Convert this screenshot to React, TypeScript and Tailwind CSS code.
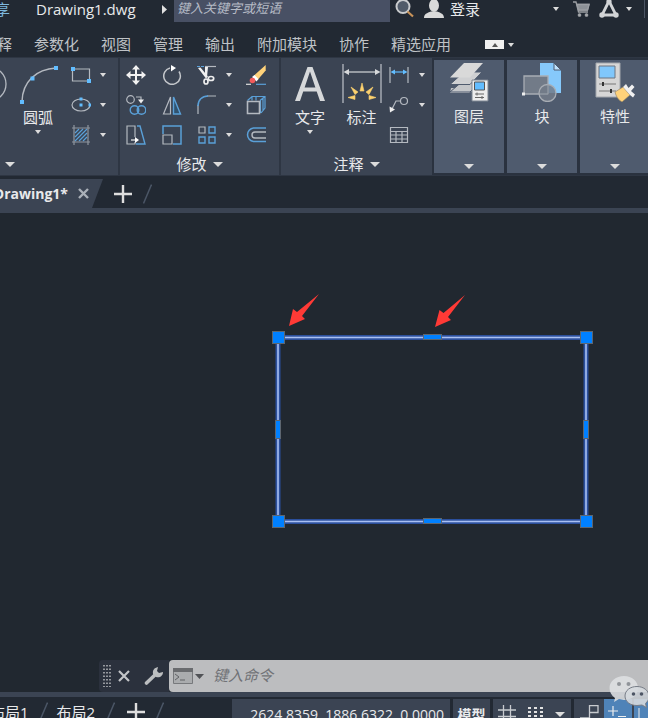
import type { ReactNode } from "react";

const BLUE = "#5aa0d8";
const DOT = "#62bdff";
const GREY = "#b4b9c0";
const LIGHT = "#d6d8da";

const menu = ["注释", "参数化", "视图", "管理", "输出", "附加模块", "协作", "精选应用"];

function Caret({ big = false }: { big?: boolean }) {
  return (
    <svg className={big ? "h-[5px] w-[10px]" : "h-[4px] w-[6px]"} viewBox="0 0 10 6" preserveAspectRatio="none">
      <path d="M0 0h10L5 6z" fill="#dcdcdc" />
    </svg>
  );
}

function Drop({ label }: { label: string }) {
  return (
    <button aria-label={label} className="flex h-[30px] items-center justify-center">
      <Caret />
    </button>
  );
}

function Tool({ label, children }: { label: string; children?: ReactNode }) {
  return (
    <button aria-label={label} className="flex h-[30px] items-center justify-center">
      <svg className="h-5 w-5 shrink-0" viewBox="0 0 20 20" fill="none" stroke={GREY} strokeWidth="1.2">
        {children}
      </svg>
    </button>
  );
}

function BigTool({ label, drop = false, children }: { label: string; drop?: boolean; children?: ReactNode }) {
  return (
    <button className="flex flex-col items-center pt-1">
      <svg className="h-10 w-10 shrink-0" viewBox="0 0 40 40" fill="none">
        {children}
      </svg>
      <span className="mt-1 h-[18px] text-[15px] leading-[18px] whitespace-nowrap">{label}</span>
      {drop && (
        <span className="flex h-3 items-center">
          <Caret />
        </span>
      )}
    </button>
  );
}

function PanelTitle({ label }: { label: string }) {
  return (
    <button className="flex h-7 w-full items-center justify-center gap-[6px] text-[15px]">
      {label}
      <Caret big />
    </button>
  );
}

function Tile({ label, children }: { label: string; children?: ReactNode }) {
  return (
    <button className="flex w-[70px] shrink-0 flex-col items-center bg-[#4f5b6e] pt-[2px] pb-1">
      <svg className="h-10 w-10 shrink-0" viewBox="0 0 40 40" fill="none">
        {children}
      </svg>
      <span className="mt-1 h-[20px] text-[15px] leading-[20px]">{label}</span>
      <span className="mt-auto">
        <Caret big />
      </span>
    </button>
  );
}

function Plus() {
  return (
    <svg className="h-[18px] w-[18px]" viewBox="0 0 18 18" stroke="#dedede" strokeWidth="2.4">
      <path d="M9 0v18M0 9h18" />
    </svg>
  );
}

function Slash() {
  return (
    <svg className="h-5 w-[9px] shrink-0" viewBox="0 0 9 20" stroke="#4b5666" strokeWidth="1.5">
      <path d="M8.500 .5L.5 19.500" />
    </svg>
  );
}

function TitleBar() {
  return (
    <header className="flex h-[22px] shrink-0 items-start overflow-hidden">
      <button className="-ml-5 h-[18px] w-[30px] shrink-0 text-[15px] leading-[18px] text-[#7db8de]">共享</button>
      <h1 className="ml-[26px] h-[18px] w-[126px] shrink-0 text-[15px] leading-[18px]">Drawing1.dwg</h1>
      <svg className="mt-[5px] h-[9px] w-[5px] shrink-0" viewBox="0 0 5 9">
        <path d="M0 0l5 4.500L0 9z" fill="#e0e0e0" />
      </svg>
      <input
        aria-label="搜索"
        placeholder="键入关键字或短语"
        className="ml-[7px] h-[22px] w-[216px] shrink-0 bg-[#485064] px-[3px] pb-[6px] text-[13px] leading-4 italic outline-none placeholder:text-[#b5bac4]"
      />
      <button aria-label="查找" className="ml-[5px] h-[18px] shrink-0">
        <svg className="h-[18px] w-5" viewBox="0 0 20 18" fill="none">
          <circle cx="8" cy="6.500" r="6.500" fill="#515b69" stroke="#c9cbcd" strokeWidth="2" />
          <path d="M12.500 11.500l5.500 5" stroke="#c8935a" strokeWidth="2.200" />
        </svg>
      </button>
      <button className="ml-[9px] flex h-[18px] shrink-0 items-start gap-[6px] text-[15px] leading-[19px]">
        <svg className="h-[18px] w-5" viewBox="0 0 20 18" fill="#dadada">
          <ellipse cx="10" cy="5.500" rx="5" ry="6.500" />
          <path d="M0 18c0-4 3-5 7-6.500h6c4 1.500 7 2.500 7 6.500z" />
        </svg>
        登录
      </button>
      <div className="ml-auto flex h-[18px] shrink-0 items-center pr-[3px]">
        <Caret />
        <button aria-label="购物车" className="ml-[14px]">
          <svg className="h-[18px] w-[17px]" viewBox="0 0 17 18" fill="none" stroke="#9c9fa4" strokeWidth="1.300">
            <path d="M0 2h3l2.500 10H15M4 4.500h12l-1.500 5.500H5.500z" />
            <path d="M4 4.500h12l-1.500 5.500H5.500z" fill="#8d9197" />
            <circle cx="6.500" cy="15" r="1.200" fill="#b4b4b4" />
            <circle cx="13.500" cy="15" r="1.200" fill="#b4b4b4" />
          </svg>
        </button>
        <button aria-label="Autodesk" className="ml-[9px]">
          <svg className="h-[18px] w-5" viewBox="0 0 20 18" fill="none" stroke="#d2d4d6" strokeWidth="2.800">
            <path d="M10 1L3 15h14z" />
            <g fill="#d2d4d6" stroke="none">
              <circle cx="10" cy="1.500" r="2.600" />
              <circle cx="3" cy="15" r="2.700" />
              <circle cx="17" cy="15" r="2.700" />
            </g>
          </svg>
        </button>
        <button aria-label="Autodesk App" className="mr-3 ml-[7px] flex">
          <Caret />
        </button>
        <span className="h-full w-px bg-[#4b5463]" />
      </div>
    </header>
  );
}

function MenuBar() {
  return (
    <nav className="flex h-[35px] shrink-0 items-center gap-[22px] overflow-hidden pt-[10px] text-[15px] text-[#bfc2c6]">
      {menu.map((m, i) => (
        <a key={m} href="#" className={i === 0 ? "-ml-[18px] shrink-0" : "shrink-0"}>
          {m}
        </a>
      ))}
      <div className="ml-3 flex shrink-0 items-center gap-1">
        <button aria-label="最小化面板" className="flex h-[9px] w-[19px] items-center justify-center bg-[#f0f0f0]">
          <svg className="h-1 w-[6px]" viewBox="0 0 6 4">
            <path d="M0 4h6L3 0z" fill="#555" />
          </svg>
        </button>
        <Caret />
      </div>
    </nav>
  );
}

function DrawPanel() {
  return (
    <section className="w-[118px] shrink-0 pt-[2px]">
      <div className="flex h-[90px]">
        <svg className="h-12 w-[7px] shrink-0" viewBox="0 0 7 48" fill="none">
          <circle cx="-11" cy="24" r="17" stroke={GREY} strokeWidth="1.300" />
        </svg>
        <div className="ml-[11px] flex w-10 justify-center">
          <BigTool label="圆弧" drop>
            <path d="M4 37.500C4.500 18 18 5 38 4" stroke={GREY} strokeWidth="1.500" />
            <path d="M2 36h4v4H2zM12.500 12.500h4v4h-4zM36 2h4v4h-4z" fill={DOT} />
          </BigTool>
        </div>
        <div className="ml-[10px] grid grid-cols-[26px_18px]">
          <Tool label="矩形">
            <path d="M1.500 4h17v12h-17z" />
            <path d="M0 2h4v4H0zM16 14h4v4h-4z" fill={DOT} stroke="none" />
          </Tool>
          <Drop label="矩形选项" />
          <Tool label="椭圆">
            <ellipse cx="10" cy="10" rx="9" ry="6" />
            <path d="M8.500 2.500h3v3h-3zM8.500 8.500h3v3h-3zM17.500 8.500h3v3h-3z" fill={DOT} stroke="none" />
          </Tool>
          <Drop label="椭圆选项" />
          <Tool label="图案填充">
            <path d="M4 8l4-4M4 12l8-8M4 16l12-12M8 16l8-8M12 16l4-4" stroke={BLUE} />
            <path d="M3 0v20M17 0v20M1 3h18M1 17h18" stroke="#8f969f" />
          </Tool>
          <Drop label="图案填充选项" />
        </div>
      </div>
      <button aria-label="绘图" className="ml-[5px] flex h-7 items-center">
        <Caret big />
      </button>
    </section>
  );
}

function ModifyPanel() {
  return (
    <section className="w-[161px] shrink-0 border-l-2 border-[#2e3643] pt-[2px]">
      <div className="grid h-[90px] grid-cols-[32px_40px_30px_14px_40px]">
        <Tool label="移动">
          <path d="M10 2v16M2 10h16" stroke="#f2f2f2" strokeWidth="2" />
          <path d="M10 0l4 4.500H6zM10 20l4-4.500H6zM0 10l4.500-4v8zM20 10l-4.500-4v8z" fill="#f2f2f2" stroke="none" />
        </Tool>
        <Tool label="旋转">
          <path d="M8 3a8.300 8.300 0 1 0 9 3.500" stroke="#c4c7cb" strokeWidth="1.500" />
          <path d="M9 0l5 3-5 3.500z" fill="#fff" stroke="none" />
        </Tool>
        <Tool label="修剪">
          <path d="M0 1.500h8" stroke={BLUE} strokeDasharray="3 1" />
          <path d="M8 1.500h11" />
          <path d="M1 3l2.500-.5 7.500 9-2 2zM8 2h3l-1 10H8z" fill="#f0f0f0" stroke="none" />
          <ellipse cx="9" cy="16.500" rx="2" ry="2.500" stroke="#eee" strokeWidth="1.700" />
          <ellipse cx="14" cy="13.500" rx="2.700" ry="2" stroke="#eee" strokeWidth="1.700" />
        </Tool>
        <Drop label="修剪选项" />
        <Tool label="删除">
          <path d="M0 19.300h5" stroke="#ddd" />
          <path d="M10 19.300h10" stroke={BLUE} />
          <path d="M19.700 0v5.500L11.500 15 7.500 11z" fill="#ffd27a" stroke="none" />
          <path d="M8.500 10l4 4-2 2.500-4.500-4.500z" fill="#fff" stroke="none" />
          <circle cx="6.500" cy="15.500" r="2.800" fill="#f35b5b" stroke="none" />
        </Tool>

        <Tool label="复制">
          <circle cx="4.500" cy="4.500" r="3.800" />
          <path d="M10 2h5v4" />
          <path d="M12 4.500h6L15 8.500z" fill="#eee" stroke="none" />
          <circle cx="8.500" cy="15" r="4.300" stroke={BLUE} strokeWidth="1.400" />
          <circle cx="15.500" cy="15" r="4.300" stroke={BLUE} strokeWidth="1.400" />
        </Tool>
        <Tool label="镜像">
          <path d="M8.500 2v17H1.500z" />
          <path d="M11.500 2v17h7z" stroke={BLUE} fill="#31536f" strokeWidth="1.400" />
        </Tool>
        <Tool label="圆角">
          <path d="M1 10v9M10 1h9" />
          <path d="M1 11C1 5 5 1 11 1" stroke={BLUE} strokeWidth="1.500" />
        </Tool>
        <Drop label="圆角选项" />
        <Tool label="分解">
          <path d="M1.500 5.500L6 1.500h13v11.500l-4 5M14 5.500l5-4M6 1.500v4M10 1.500v4M14.500 18V5M17 3v12" stroke={BLUE} />
          <path d="M1.500 6.500h12v12h-12z" strokeWidth="1.600" />
        </Tool>

        <Tool label="拉伸">
          <path d="M9 12V1H1v18h8v-2" />
          <path d="M11 1h3l5 18h-9" stroke={BLUE} strokeWidth="1.400" />
          <path d="M5 15h5" stroke="#eee" />
          <path d="M9 12l4 3-4 3z" fill="#fff" stroke="none" />
        </Tool>
        <Tool label="缩放">
          <path d="M1 9V1h18v18h-8" stroke={BLUE} strokeWidth="1.500" />
          <path d="M1 10h9v9H1z" />
        </Tool>
        <Tool label="阵列">
          <path d="M2 2h6v6H2z" />
          <path d="M12 2h6v6h-6zM2 12h6v6H2zM12 12h6v6h-6z" stroke={BLUE} strokeWidth="1.400" />
        </Tool>
        <Drop label="阵列选项" />
        <Tool label="偏移">
          <path d="M20 3H7.500a6.800 6.800 0 0 0 0 13.500H20" stroke={BLUE} strokeWidth="1.500" />
          <path d="M20 7H9a3 3 0 0 0 0 6h11" strokeWidth="1.400" />
        </Tool>
      </div>
      <PanelTitle label="修改" />
    </section>
  );
}

function AnnotatePanel() {
  return (
    <section className="w-[153px] shrink-0 border-l-2 border-[#2e3643] pt-[2px]">
      <div className="flex h-[90px]">
        <div className="flex w-[58px] justify-center">
          <BigTool label="文字" drop>
            <path
              d="M5 37L17.500 3h5L35 37h-5l-3.300-9.500H13.200L10 37zM14.600 23.500h10.800L20 7.500z"
              fill={LIGHT}
              fillRule="evenodd"
            />
          </BigTool>
        </div>
        <div className="flex w-[45px] justify-center">
          <BigTool label="标注">
            <path d="M1 0v39M39 0v39" stroke={GREY} strokeWidth="1.300" />
            <path d="M4 8h32" stroke={LIGHT} strokeWidth="1.200" />
            <path d="M1.500 8L7 5v6zM38.500 8L33 5v6z" fill={LIGHT} />
            <path
              d="M20 19l2 8h-4zM9 23l7 5-3 2.500zM31 23l-7 5 3 2.500zM6 33.500l7-2v4zM34 33.500l-7-2v4z"
              fill="#fdd26e"
              stroke="#fdd26e"
              strokeWidth=".6"
            />
          </BigTool>
        </div>
        <div className="grid grid-cols-[30px_16px]">
          <Tool label="线性标注">
            <path d="M1 2v16M19 2v16" />
            <path d="M3 7h14" stroke={DOT} />
            <path d="M1.500 7L6 4.500v5zM18.500 7L14 4.500v5z" fill={DOT} stroke="none" />
          </Tool>
          <Drop label="标注选项" />
          <Tool label="引线">
            <circle cx="15" cy="6" r="3.500" />
            <path d="M11.500 6H7L3 14" />
            <path d="M.5 11.500l5.500 3-5 3z" fill="#eee" stroke="none" />
          </Tool>
          <Drop label="引线选项" />
          <Tool label="表格">
            <path d="M1.500 2.500h17v15h-17zM1.500 6.500h17M1.500 10h17M1.500 14h17M7 6.500v11M13 6.500v11" />
          </Tool>
        </div>
      </div>
      <PanelTitle label="注释" />
    </section>
  );
}

function Ribbon() {
  return (
    <div className="flex h-[119px] shrink-0 overflow-hidden border-y border-[#2e3643] bg-[#3b4453]">
      <DrawPanel />
      <ModifyPanel />
      <AnnotatePanel />
      <div className="flex grow gap-[3px] border-2 border-r-0 border-[#2a323f] bg-[#2a323f]">
        <Tile label="图层">
          <path d="M2 26h26l-8 5H1z" fill="#bfc1c4" />
          <path d="M15 18h18l-12 12H1z" fill="#c4c6c9" stroke="#4f5b6e" />
          <path d="M15 10h18L21 22.500H1z" fill="#cfd0d2" stroke="#4f5b6e" />
          <path d="M15 1h19L21 15.500H1z" fill="#d9d9d9" />
          <path d="M23 18h16v21H23z" fill="#ededed" stroke="#7d8590" />
          <path d="M25.500 20h10v8h-10z" fill="#62bdff" stroke="#555" />
          <path d="M26 32h9M26 35.500h9M28 30.500v3M33 34v3" stroke="#666" />
        </Tile>
        <Tile label="块">
          <path d="M18 1h14l7 7v23H18z" fill="#86c9fb" />
          <path d="M32 1v7h7z" fill="#bfe2fc" stroke="#4f5b6e" />
          <path d="M2 14h24v18H2z" fill="#727b88" stroke="#a8adb4" strokeWidth="1.300" />
          <circle cx="25.500" cy="31" r="8.500" fill="#727b88" fillOpacity=".85" stroke="#a8adb4" strokeWidth="1.300" />
          <path d="M18 32h8V22.500" stroke="#99a0a9" />
          <path d="M0 30.500h3v3H0z" fill="#eee" />
        </Tile>
        <Tile label="特性">
          <path d="M1 1h24v34H1z" fill="#d6d6d6" stroke="#a3a7ac" />
          <path d="M4 4h16v12H4z" fill="#80c7fb" stroke="#6d7580" />
          <path d="M4 22h17M4 29h17" stroke="#777" />
          <path d="M8 20v4M16 27v4" stroke="#333" strokeWidth="2" />
          <path d="M20 30l8-5 7 8-8 7c-4-2-6-6-7-10z" fill="#ffd27a" stroke="#8d7e62" strokeWidth=".6" />
          <path d="M28 25l3-3 2.500 4 3.500-3.500 2.500 2.500-3.500 4 4 3.500-2 3-3-2.500z" fill="#f0f0f0" />
        </Tile>
      </div>
    </div>
  );
}

function FileTabs() {
  return (
    <div className="mt-[3px] flex h-[29px] shrink-0 items-stretch overflow-hidden">
      <div className="flex w-[103px] shrink-0 items-center justify-end bg-[#3b4453] pr-[14px] [clip-path:polygon(0_0,100%_0,calc(100%-11px)_100%,0_100%)]">
        <a href="#" className="text-[14px] font-bold">
          Drawing1*
        </a>
        <button aria-label="关闭" className="ml-[10px]">
          <svg className="h-[11px] w-[11px]" viewBox="0 0 11 11" stroke="#aab0b8" strokeWidth="2.400">
            <path d="M1 1l9 9M10 1l-9 9" />
          </svg>
        </button>
      </div>
      <div className="flex items-center">
        <button aria-label="新图形" className="ml-[11px]">
          <Plus />
        </button>
        <span className="ml-[11px]">
          <Slash />
        </span>
      </div>
    </div>
  );
}

const corners = [
  [278, 124],
  [586, 124],
  [278, 308],
  [586, 308],
];

function Canvas() {
  return (
    <main className="min-h-[440px] grow bg-[#212830]">
      <svg className="h-[440px] w-full" fill="none">
        <rect x="278" y="124.500" width="308" height="184" stroke="#2b4f9c" strokeWidth="5" />
        <rect x="278" y="124.500" width="308" height="184" stroke="#a9c0f2" strokeWidth="1.600" />
        <g fill="#0080ff" stroke="#5d6670">
          {corners.map(([x, y]) => (
            <rect key={`${x}-${y}`} x={x - 5.5} y={y - 5.5} width="12" height="12" />
          ))}
          <rect x="423.500" y="121.500" width="18" height="5" />
          <rect x="423.500" y="305.500" width="18" height="5" />
          <rect x="275.500" y="207.500" width="5" height="18" />
          <rect x="583.500" y="207.500" width="5" height="18" />
        </g>
        <path d="M289 113l4-17 4 3 22-18-17 22 3 3z" fill="#ff3a36" />
        <path d="M435 114l4.500-17 4 3 21.500-18-17 22 3 3z" fill="#ff3a36" />
      </svg>
    </main>
  );
}

function CommandLine() {
  return (
    <div className="flex h-8 shrink-0 bg-[#212830] pl-[99px]">
      <div className="flex w-[70px] shrink-0 items-center rounded-l bg-[#2b313d]">
        <svg className="ml-1 h-[22px] w-2" viewBox="0 0 8 22" stroke="#b9bbbe" strokeWidth="1.500" strokeDasharray="1.500 2">
          <path d="M1 0v22M4 0v22M7 0v22" />
        </svg>
        <button aria-label="关闭命令行" className="ml-[7px]">
          <svg className="h-3 w-3" viewBox="0 0 12 12" stroke="#c3c5c8" strokeWidth="2.200">
            <path d="M1 1l10 10M11 1L1 11" />
          </svg>
        </button>
        <button aria-label="自定义" className="ml-[14px]">
          <svg className="h-[18px] w-[19px]" viewBox="0 0 19 18">
            <path d="M2.500 16L12 7" stroke="#bcbec0" strokeWidth="3.600" strokeLinecap="round" />
            <path d="M14 0l-1 4 2 2 4-1c0 4-3 6-7 5L9 7c-.5-4 1-6 5-7z" fill="#bcbec0" />
          </svg>
        </button>
      </div>
      <label className="flex min-w-0 grow items-center rounded-l-sm bg-[#bcbdbf] pl-1">
        <svg className="h-4 w-5 shrink-0" viewBox="0 0 20 16" fill="none">
          <path d="M.5 .5h19v15H.5z" fill="#aaacae" stroke="#77797c" />
          <path d="M0 0h20v4H0z" fill="#696b6e" />
          <path d="M2 6l4 3-4 3M7 12h5" stroke="#606265" />
        </svg>
        <svg className="ml-[2px] h-[5px] w-[9px] shrink-0" viewBox="0 0 9 5">
          <path d="M0 0h9L4.500 5z" fill="#505256" />
        </svg>
        <input
          aria-label="命令"
          placeholder="键入命令"
          className="ml-[9px] min-w-0 grow bg-transparent pb-[2px] text-[15px] text-[#333] italic outline-none placeholder:text-[#707276]"
        />
      </label>
    </div>
  );
}

function StatusBar() {
  return (
    <footer className="flex h-[21px] shrink-0 gap-[3px] overflow-hidden pt-[2px]">
      <div className="flex h-[26px] w-[229px] shrink-0 items-center text-[15px]">
        <a href="#" className="-ml-[10px] shrink-0">
          布局1
        </a>
        <span className="ml-[10px]">
          <Slash />
        </span>
        <a href="#" className="ml-[9px] shrink-0">
          布局2
        </a>
        <span className="ml-[11px]">
          <Slash />
        </span>
        <button aria-label="新建布局" className="ml-[12px]">
          <Plus />
        </button>
        <span className="ml-[10px]">
          <Slash />
        </span>
      </div>
      <div className="flex h-[30px] w-[218px] shrink-0 items-center justify-end bg-[#3b4453] pr-[6px] text-[14px] font-medium whitespace-nowrap">
        2624.8359, 1886.6322, 0.0000
      </div>
      <button className="flex h-[30px] w-[37px] shrink-0 items-center justify-center bg-[#3b4453] text-[14px] font-bold">
        模型
      </button>
      <div className="flex h-[32px] w-[78px] shrink-0 bg-[#3b4453] pt-[6px]">
        <button aria-label="栅格" className="ml-[5px] h-[18px]">
          <svg className="h-[18px] w-[18px]" viewBox="0 0 18 18" stroke="#c8cbcf" strokeWidth="1.300">
            <path d="M5.500 0v18M12.500 0v18M0 5h18M0 11.500h18" />
          </svg>
        </button>
        <button aria-label="捕捉" className="ml-3 h-[12px]">
          <svg className="mt-[2px] h-[10px] w-[15px]" viewBox="0 0 15 10" fill="#e2e2e2">
            <path d="M0 0h3v2H0zM6 0h3v2H6zM12 0h3v2h-3zM0 4h3v2H0zM6 4h3v2H6zM12 4h3v2h-3zM0 8h3v2H0zM6 8h3v2H6zM12 8h3v2h-3z" />
          </svg>
        </button>
        <button aria-label="捕捉选项" className="ml-3 h-[12px] pt-[6px]">
          <Caret big />
        </button>
      </div>
      <div className="flex h-[32px] grow bg-[#3b4453]">
        <button aria-label="正交" className="flex w-[30px] shrink-0 justify-center pt-[6px]">
          <svg className="h-[18px] w-[22px]" viewBox="0 0 22 18" fill="none" stroke="#c8cbcf" strokeWidth="1.300">
            <path d="M11.500 .5h8.500v7h-8.500zM11.500 7v6M2 13h10" />
          </svg>
        </button>
        <button aria-label="极轴" className="flex w-7 shrink-0 bg-[#4f83b8] pt-[6px] pl-1">
          <svg className="h-[18px] w-5" viewBox="0 0 20 18" stroke="#eee" strokeWidth="1.200">
            <path d="M5 1v10M0 6h10M10 11.500h8" />
          </svg>
        </button>
        <button aria-label="对象捕捉" className="ml-[2px] grow bg-[#4f83b8] pl-1">
          <svg className="h-[18px] w-2" viewBox="0 0 8 18" fill="none" stroke="#eee">
            <path d="M1 2v12h7" />
          </svg>
        </button>
      </div>
    </footer>
  );
}

function ChatBadge() {
  return (
    <svg className="absolute right-0 bottom-2 h-[36px] w-[40px]" viewBox="0 0 40 36">
      <path
        d="M16 2c8 0 14 5 14 12s-6 12-14 12l-5-1-5 3 1-4C3.500 21.500 1.500 18 1.500 14 1.500 7 8 2 16 2z"
        fill="#dddfe1"
        fillOpacity=".9"
      />
      <path
        d="M29 12.500c7 0 12 4.500 12 10 0 3-1.500 5-3.500 7l1 4-4.500-2.500-5 .5c-7 0-12-4-12-9.500s5-9.500 12-9.500z"
        fill="#d5d9de"
        stroke="#777d87"
        fillOpacity=".9"
      />
      <g fill="#909499">
        <circle cx="11" cy="10" r="2" />
        <circle cx="20.500" cy="10" r="2" />
      </g>
      <g fill="#4d5665">
        <circle cx="25.500" cy="20" r="1.800" />
        <circle cx="33.500" cy="20" r="1.800" />
      </g>
    </svg>
  );
}

export default function App() {
  return (
    <div className="relative flex min-h-screen flex-col overflow-hidden bg-[#222933] font-['Open_Sans','Noto_Sans_CJK_SC',sans-serif] text-[#e8e9eb]">
      <TitleBar />
      <MenuBar />
      <Ribbon />
      <FileTabs />
      <div className="h-[5px] shrink-0 bg-[#3b4453]" />
      <Canvas />
      <CommandLine />
      <div className="h-[5px] shrink-0 bg-[#3b4453]" />
      <StatusBar />
      <ChatBadge />
    </div>
  );
}
